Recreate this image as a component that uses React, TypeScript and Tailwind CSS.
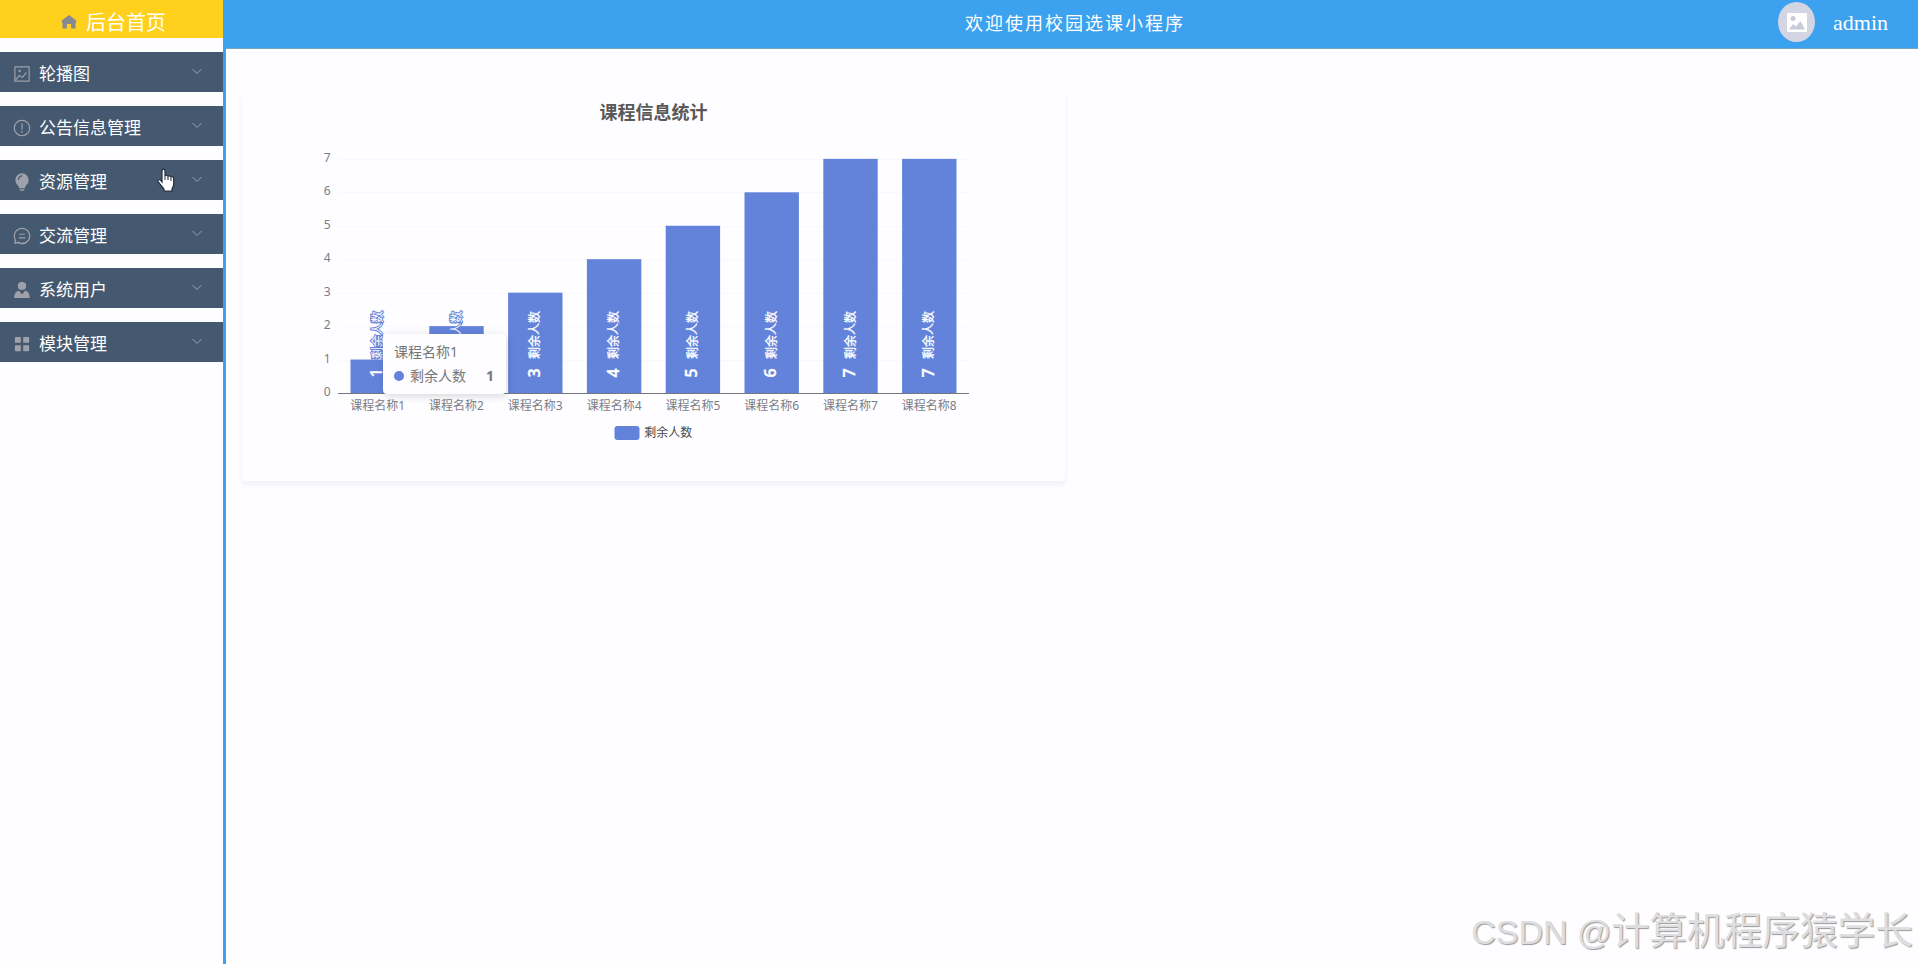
import React from "react";

const CJK = "font-['Noto_Sans','Noto_Sans_CJK_SC',sans-serif]";

function Icon({ className, children }: { className: string; children: React.ReactNode }) {
  return (
    <svg viewBox="0 0 1024 1024" fill="currentColor" className={className}>
      {children}
    </svg>
  );
}

const HomeIcon = () => (
  <Icon className="size-4 text-[#868994]">
    <path d="M512 64 50 420v120h44v388h280V640h276v288h280V540h44V420z" />
  </Icon>
);

const PictureIcon = () => (
  <>
    <path d="M160 160v704h704V160H160zm-32-64h768a32 32 0 0 1 32 32v768a32 32 0 0 1-32 32H128a32 32 0 0 1-32-32V128a32 32 0 0 1 32-32z" />
    <path d="M384 288q64 0 64 64t-64 64q-64 0-64-64t64-64zM185 877l-51-39 188-247a64 64 0 0 1 88-14l95 66a32 32 0 0 0 44-7l170-226 51 38-173 230a96 96 0 0 1-132 21l-92-65z" />
  </>
);

const WarningIcon = () => (
  <path d="M512 64a448 448 0 1 1 0 896 448 448 0 0 1 0-896zm0 832a384 384 0 0 0 0-768 384 384 0 0 0 0 768zm48-176a48 48 0 1 1-96 0 48 48 0 0 1 96 0zm-48-464a32 32 0 0 1 32 32v288a32 32 0 0 1-64 0V288a32 32 0 0 1 32-32z" />
);

const BulbIcon = () => (
  <path d="M384 900h256v20a64 64 0 0 1-64 64H448a64 64 0 0 1-64-64zm-32-58c0-65-32-120-96-184a360 360 0 1 1 512 0c-64 64-96 119-96 184H352zm-64-436h60c0-112 60-196 176-196v-64c-150 0-236 110-236 260z" />
);

const ChatIcon = () => (
  <path d="m174.700 855.700 135.300-45.100 23.700 15.200C387 860 448 880 512 880c206 0 384-165 384-376S718 128 512 128 128 293 128 504c0 69 19 134 55 190l14 22-22 140zm-45 82.500a32 32 0 0 1-36-38l31-170A431 431 0 0 1 64 512C64 265 265 64 512 64s448 201 448 448-201 448-448 448a446 446 0 0 1-212-54l-171 32zM352 576h320q32 0 32 32t-32 32H352q-32 0-32-32t32-32zm32-192h256q32 0 32 32t-32 32H384q-32 0-32-32t32-32z" />
);

const UsersIcon = () => (
  <path d="M288 290a224 214 0 1 0 448 0 224 214 0 1 0-448 0zM90 940c0-210 80-360 260-390l162 200 162-200c180 30 260 180 260 390z" />
);

const GridIcon = () => (
  <path d="M160 448a32 32 0 0 1-32-32V160a32 32 0 0 1 32-32h256a32 32 0 0 1 32 32v256a32 32 0 0 1-32 32H160zm448 0a32 32 0 0 1-32-32V160a32 32 0 0 1 32-32h256a32 32 0 0 1 32 32v256a32 32 0 0 1-32 32H608zM160 896a32 32 0 0 1-32-32V608a32 32 0 0 1 32-32h256a32 32 0 0 1 32 32v256a32 32 0 0 1-32 32H160zm448 0a32 32 0 0 1-32-32V608a32 32 0 0 1 32-32h256a32 32 0 0 1 32 32v256a32 32 0 0 1-32 32H608z" />
);

const MENU = [
  { label: "轮播图", icon: <PictureIcon /> },
  { label: "公告信息管理", icon: <WarningIcon /> },
  { label: "资源管理", icon: <BulbIcon /> },
  { label: "交流管理", icon: <ChatIcon /> },
  { label: "系统用户", icon: <UsersIcon /> },
  { label: "模块管理", icon: <GridIcon /> },
];

function Sidebar() {
  return (
    <aside className="flex w-[226px] shrink-0 flex-col gap-3.5 border-r-[3px] border-[#3ca1ee]">
      <div className="flex h-[38px] items-center justify-center gap-[9px] bg-[#ffd01c] pt-1.5 pl-1 text-xl text-white">
        <HomeIcon />
        <span className="pt-0.5 leading-none">后台首页</span>
      </div>
      {MENU.map((item) => (
        <div key={item.label} className="flex h-10 items-center bg-[#44596f] pr-5 pl-3 text-[17px] text-white">
          <Icon className="mt-[3px] size-[20px] shrink-0 text-[#9fa1aa]">
            <g transform="translate(26 26) scale(0.95)">{item.icon}</g>
          </Icon>
          <span className="mt-0.5 ml-[7px] flex-1 leading-none whitespace-nowrap">{item.label}</span>
          <svg viewBox="0 0 12 12" className="mb-0.5 size-3 text-[#9aa1ac]" fill="none" stroke="currentColor">
            <path d="M1.500 4 6 8.500l4.500-4.500" />
          </svg>
        </div>
      ))}
    </aside>
  );
}

function Header() {
  return (
    <header className="flex h-[49px] items-center justify-end border-b border-[#78a6bf] bg-[#3ca1ee] text-white">
      <h1 className="mr-[593px] pb-[3px] text-[18px] leading-none tracking-[2px]">欢迎使用校园选课小程序</h1>
      <div className="mr-[18px] mb-1 flex h-10 w-[37px] items-center justify-center rounded-[50%] bg-[#d4d5e2]">
        <svg viewBox="0 0 20 19" className="h-[19px] w-5">
          <rect width="20" height="19" rx="1" fill="#fff" />
          <circle cx="6" cy="5.500" r="2.500" fill="#c9cad8" />
          <path d="M2 16.500 6 11l3 2.500L13.500 8l4.500 8.500z" fill="#c9cad8" />
        </svg>
      </div>
      <span className="mr-[30px] mb-[3px] font-['Liberation_Serif',serif] text-[22px] leading-none">admin</span>
    </header>
  );
}

const VALUES = [1, 2, 3, 4, 5, 6, 7, 7];
const LEFT = 96;
const BASE = 303;
const STEP = 78.8;
const UNIT = 33.45;

function Chart() {
  return (
    <svg viewBox="0 0 823 391" className="h-[391px] w-[823px]">
      <text x="411.500" y="28.500" textAnchor="middle" fontSize="18" fontWeight="700" fill="#595959">课程信息统计</text>
      {[0, 1, 2, 3, 4, 5, 6, 7].map((n) => (
        <g key={n}>
          {n > 0 && <path d={`M${LEFT} ${Math.round(BASE - n * UNIT) + 0.5}h631`} stroke="#f9f8fc" />}
          <text x="88.500" y={BASE - n * UNIT + 3} textAnchor="end" fontSize="12" fill="#7b7d87">{n}</text>
        </g>
      ))}
      {VALUES.map((v, i) => {
        const cx = LEFT + 0.3 + STEP * (i + 0.5);
        return (
          <g key={i}>
            <rect x={cx - 27.2} y={BASE - v * UNIT} width="54.400" height={v * UNIT} fill="#6383da" />
            <g
              transform={`translate(${cx + 4.5} 287.500) rotate(-90)`}
              fill="#fff"
              stroke={v < 3 ? "#6383da" : "#fff"}
              strokeWidth={v < 3 ? 2 : 0.3}
              paintOrder="stroke"
            >
              <text fontSize="16" fontWeight="600">{v}</text>
              <text x="18.500" y="-0.500" fontSize="12">剩余人数</text>
            </g>
            <text x={cx} y="320" textAnchor="middle" fontSize="12" fill="#7b7d87">课程名称{i + 1}</text>
          </g>
        );
      })}
      <path d={`M${LEFT} 303.500h631`} stroke="#75777f" />
      <rect x="372.500" y="336" width="25" height="14" rx="3" fill="#6383da" />
      <text x="402.300" y="346.500" fontSize="12" fill="#4a4a4a">剩余人数</text>
    </svg>
  );
}

function Tooltip() {
  return (
    <div className="absolute top-[244px] left-[141px] flex h-[60px] w-[123px] flex-col justify-center gap-2.5 rounded bg-[#fefdff] pr-3 pb-px pl-[11px] text-sm leading-none text-[#777] shadow-[1px_2px_8px_rgba(0,0,0,0.16)]">
      <div>课程名称1</div>
      <div className="flex items-center">
        <span className="size-2.5 rounded-full bg-[#6383da]" />
        <span className="ml-1.5 flex-1">剩余人数</span>
        <span className="font-bold">1</span>
      </div>
    </div>
  );
}

export default function App() {
  return (
    <div className={`relative flex h-[964px] w-[1918px] overflow-hidden bg-[#fefdff] ${CJK}`}>
      <Sidebar />
      <div className="flex flex-1 flex-col">
        <Header />
        <main className="px-4 pt-[41px]">
          <section className="relative h-[391px] w-[823px] rounded bg-[#fefdff] shadow-[0_4px_5px_rgba(90,80,180,0.08)]">
            <Chart />
            <Tooltip />
          </section>
        </main>
      </div>
      <svg viewBox="0 0 18 24" className="absolute top-[168px] left-[157px] h-6 w-[18px]">
        <path
          d="M5 14V3c0-2.400 3-2.400 3 0v5c.5-1.200 2.700-1 3 .5.700-1.200 2.700-.8 3 .7.800-.9 2.700-.4 2.700 1.200V16c0 2-1.200 3.500-1.700 5v2H7v-2C5 18.500 3 16 1.300 13.800c-1-1.500.8-3 2.200-1.700z"
          fill="#fff"
          stroke="#222b38"
          strokeWidth="1.200"
        />
        <path d="M8 8v4M11 9v3M14 10v3" stroke="#222b38" fill="none" />
      </svg>
      <div className="absolute right-[5px] bottom-[13px] font-['Liberation_Sans','Noto_Sans_CJK_SC',sans-serif] text-[37.700px] leading-none whitespace-nowrap text-[#dedee0] [text-shadow:1px_1px_1px_#999]">
        <span className="text-[34px]">CSDN @</span>计算机程序猿学长
      </div>
    </div>
  );
}
